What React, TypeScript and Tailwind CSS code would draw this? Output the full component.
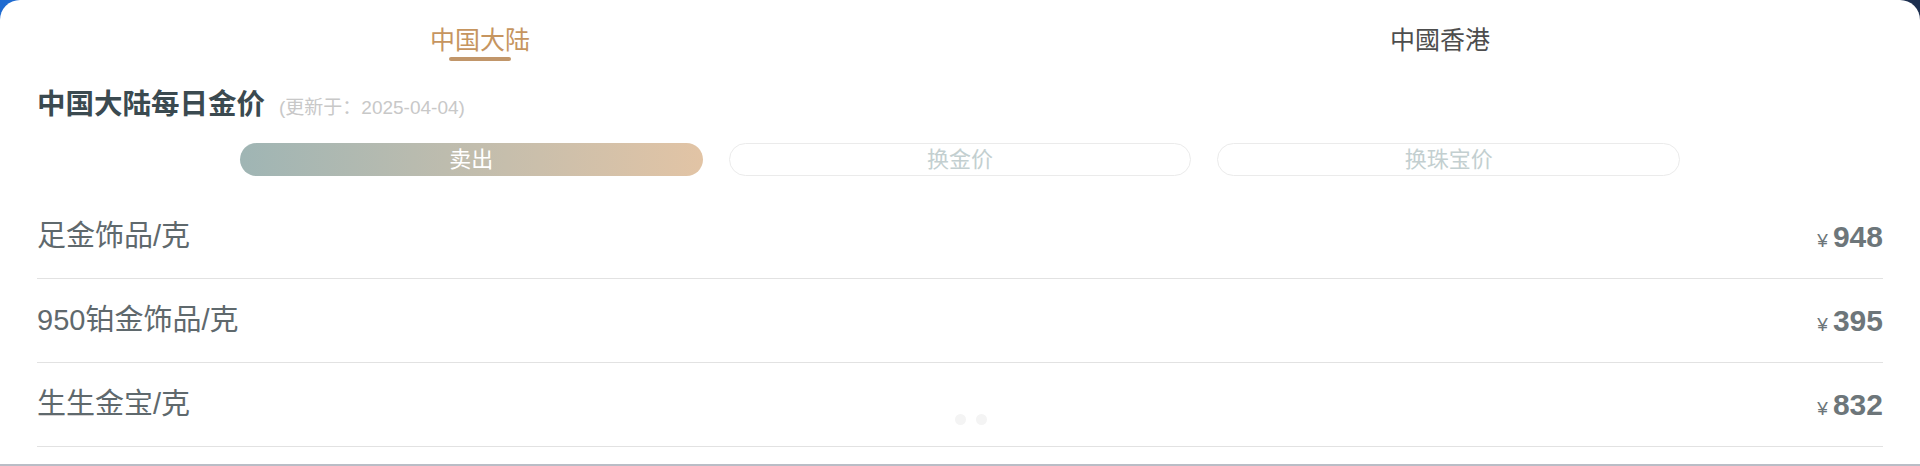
import React from "react";

const rows = [
  { name: "足金饰品/克", price: "948" },
  { name: "950铂金饰品/克", price: "395" },
  { name: "生生金宝/克", price: "832" },
];

export default function App() {
  return (
    <div
      className="relative h-[466px] w-[1920px] overflow-hidden bg-gradient-to-r from-[#1f6bd1] via-[#3a5a8a] to-[#1c2f4f]"
      style={{ fontFamily: '"Liberation Sans", Arial, "Noto Sans CJK SC", sans-serif' }}
    >
      <div className="relative h-[464px] rounded-t-[20px] bg-white">
        {/* tabs */}
        <div className="flex pt-[25px]">
          <div className="flex flex-1 flex-col items-center">
            <div className="text-[25px] leading-[30px] text-[#c6955f]">中国大陆</div>
            <div className="mt-[2px] h-[4px] w-[62px] rounded-full bg-[#c1966a]" />
          </div>
          <div className="flex flex-1 flex-col items-center">
            <div className="text-[25px] leading-[30px] text-[#4d4d4d]">中國香港</div>
          </div>
        </div>

        {/* title */}
        <div className="mt-[23px] flex items-baseline px-[37px]">
          <div className="text-[28.5px] font-bold leading-[40px] text-[#3b4a50]">中国大陆每日金价</div>
          <div className="ml-[14px] text-[19px] text-[#c8c8c8]">(更新于：2025-04-04)</div>
        </div>

        {/* pills */}
        <div className="mx-auto mt-[19px] grid w-[1440px] grid-cols-3 gap-[26px]">
          <div className="flex h-[33px] items-center justify-center rounded-full bg-gradient-to-r from-[#9fb5b4] to-[#e2c4a5] text-[22px] text-white">
            卖出
          </div>
          <div className="flex h-[33px] items-center justify-center rounded-full border border-[#ebebeb] text-[22px] text-[#c3cfd0]">
            换金价
          </div>
          <div className="flex h-[33px] items-center justify-center rounded-full border border-[#ebebeb] text-[22px] text-[#c3cfd0]">
            换珠宝价
          </div>
        </div>

        {/* rows */}
        <div className="mt-[19px] px-[37px]">
          {rows.map((r) => (
            <div
              key={r.name}
              className="flex h-[84px] items-center justify-between border-b border-[#e2e2e2]"
            >
              <div className="text-[29px] text-[#5f696d]">{r.name}</div>
              <div className="flex items-baseline text-[#6d767a]">
                <span className="mr-[5px] text-[19px]">¥</span>
                <span className="text-[30px] font-bold">{r.price}</span>
              </div>
            </div>
          ))}
        </div>

        {/* pagination dots */}
        <div className="absolute left-[955px] top-[414px] flex gap-[10px]">
          <div className="h-[11px] w-[11px] rounded-full bg-[#f4f4f4]" />
          <div className="h-[11px] w-[11px] rounded-full bg-[#f4f4f4]" />
        </div>
      </div>
      <div className="h-[2px] bg-[#b9bdc6]" />
    </div>
  );
}
